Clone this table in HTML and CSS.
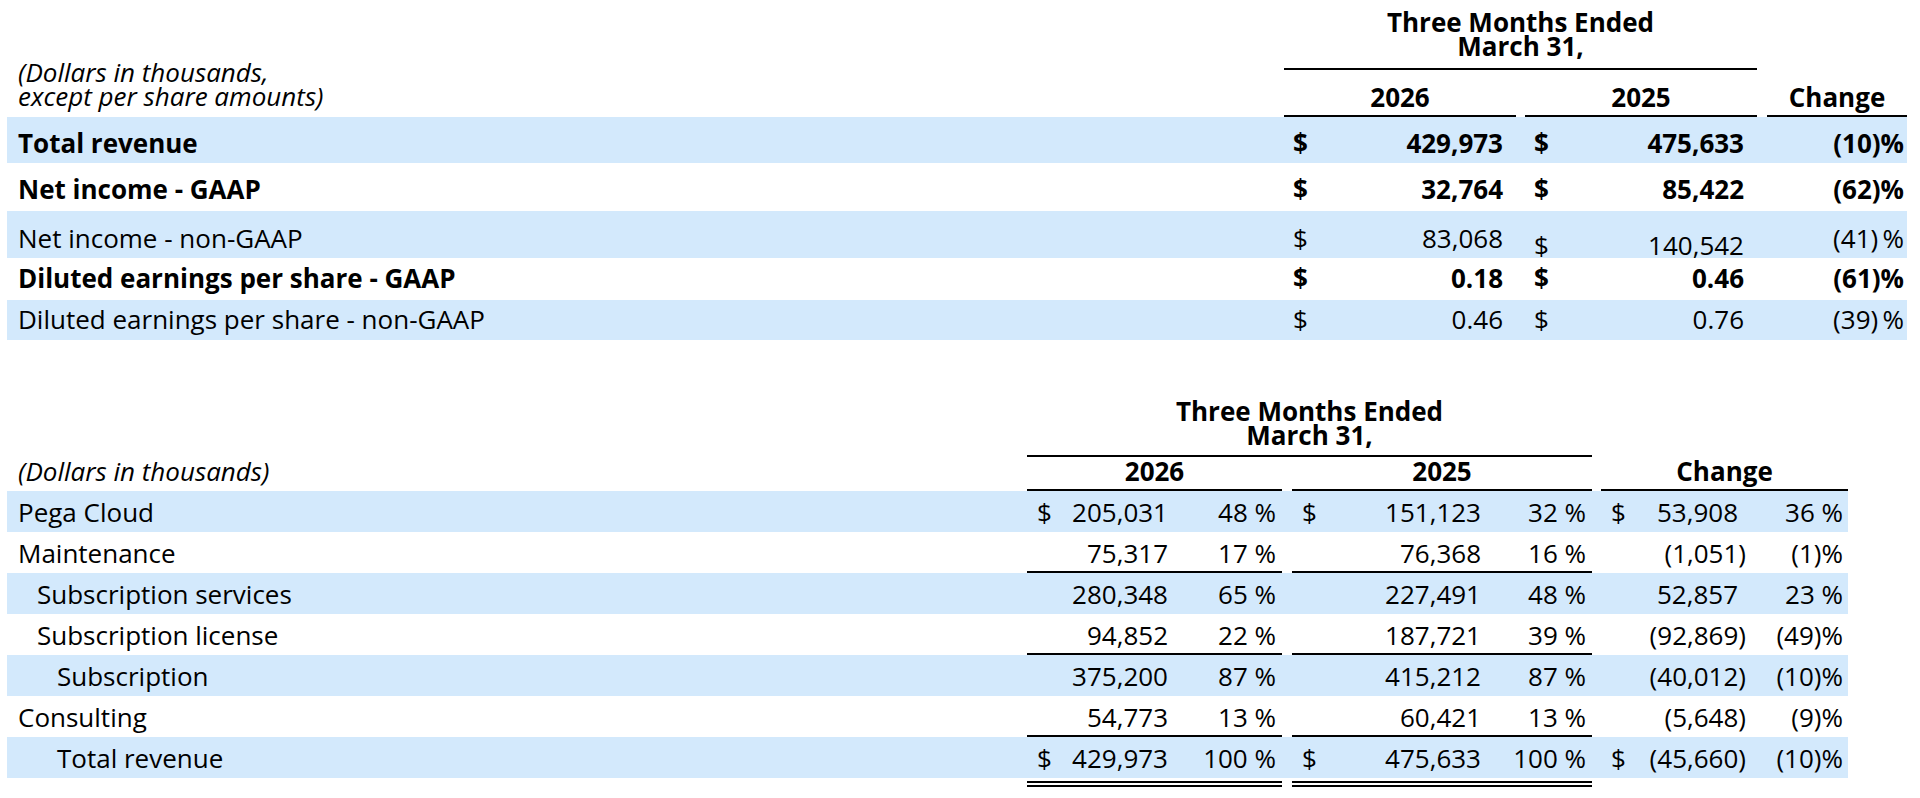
FILE: index.html
```html
<!DOCTYPE html>
<html lang="en">
<head>
<meta charset="utf-8">
<title>Financial highlights</title>
<link rel="stylesheet" href="styles.css">
</head>
<body>
<div class="page">
  <table class="fin top">
    <colgroup>
      <col class="w-lab"><col class="w-cur"><col class="w-amt"><col class="w-gap1">
      <col class="w-cur"><col class="w-amt"><col class="w-gap2"><col class="w-chg">
    </colgroup>
    <tr class="ha">
      <td class="lab-h" rowspan="2">(Dollars in thousands,<br>except per share amounts)</td>
      <td class="span-h" colspan="5">Three Months Ended<br>March 31,</td>
      <td></td><td></td>
    </tr>
    <tr class="hb">
      <td class="yr" colspan="2">2026</td><td></td>
      <td class="yr" colspan="2">2025</td><td></td>
      <td class="yr">Change</td>
    </tr>
    <tr class="band b ra">
      <td class="lab">Total revenue</td>
      <td class="cur">$</td><td class="amt">429,973</td><td></td>
      <td class="cur">$</td><td class="amt">475,633</td><td></td>
      <td class="chg">(10)%</td>
    </tr>
    <tr class="b rb">
      <td class="lab">Net income - GAAP</td>
      <td class="cur">$</td><td class="amt">32,764</td><td></td>
      <td class="cur">$</td><td class="amt">85,422</td><td></td>
      <td class="chg">(62)%</td>
    </tr>
    <tr class="band rc">
      <td class="lab">Net income - non-GAAP</td>
      <td class="cur">$</td><td class="amt">83,068</td><td></td>
      <td class="cur low">$</td><td class="amt low">140,542</td><td></td>
      <td class="chg">(41)&thinsp;%</td>
    </tr>
    <tr class="b rd">
      <td class="lab">Diluted earnings per share - GAAP</td>
      <td class="cur">$</td><td class="amt">0.18</td><td></td>
      <td class="cur">$</td><td class="amt">0.46</td><td></td>
      <td class="chg">(61)%</td>
    </tr>
    <tr class="band re">
      <td class="lab">Diluted earnings per share - non-GAAP</td>
      <td class="cur">$</td><td class="amt">0.46</td><td></td>
      <td class="cur">$</td><td class="amt">0.76</td><td></td>
      <td class="chg">(39)&thinsp;%</td>
    </tr>
  </table>

  <table class="fin bot">
    <colgroup>
      <col class="b-lab">
      <col class="b-cur"><col class="b-amt1"><col class="b-pct1">
      <col class="b-gap1">
      <col class="b-cur"><col class="b-amt2"><col class="b-pct2">
      <col class="b-gap2">
      <col class="b-cur"><col class="b-amt3"><col class="b-pct3">
    </colgroup>
    <tr class="ha">
      <td></td>
      <td class="span-h" colspan="7">Three Months Ended<br>March 31,</td>
      <td></td><td></td><td></td><td></td>
    </tr>
    <tr class="hb">
      <td class="lab-h">(Dollars in thousands)</td>
      <td class="yr" colspan="3">2026</td><td></td>
      <td class="yr" colspan="3">2025</td><td></td>
      <td class="yr" colspan="3">Change</td>
    </tr>
    <tr class="band">
      <td class="lab">Pega Cloud</td>
      <td class="cur">$</td><td class="amt">205,031</td><td class="pct">48&nbsp;%</td><td></td>
      <td class="cur">$</td><td class="amt">151,123</td><td class="pct">32&nbsp;%</td><td></td>
      <td class="cur">$</td><td class="camt np">53,908</td><td class="cpct">36&nbsp;%</td>
    </tr>
    <tr>
      <td class="lab">Maintenance</td>
      <td class="ul"></td><td class="amt ul">75,317</td><td class="pct ul">17&nbsp;%</td><td></td>
      <td class="ul"></td><td class="amt ul">76,368</td><td class="pct ul">16&nbsp;%</td><td></td>
      <td></td><td class="camt">(1,051)</td><td class="cpct">(1)%</td>
    </tr>
    <tr class="band">
      <td class="lab i1">Subscription services</td>
      <td></td><td class="amt">280,348</td><td class="pct">65&nbsp;%</td><td></td>
      <td></td><td class="amt">227,491</td><td class="pct">48&nbsp;%</td><td></td>
      <td></td><td class="camt np">52,857</td><td class="cpct">23&nbsp;%</td>
    </tr>
    <tr>
      <td class="lab i1">Subscription license</td>
      <td class="ul"></td><td class="amt ul">94,852</td><td class="pct ul">22&nbsp;%</td><td></td>
      <td class="ul"></td><td class="amt ul">187,721</td><td class="pct ul">39&nbsp;%</td><td></td>
      <td></td><td class="camt">(92,869)</td><td class="cpct">(49)%</td>
    </tr>
    <tr class="band">
      <td class="lab i2">Subscription</td>
      <td></td><td class="amt">375,200</td><td class="pct">87&nbsp;%</td><td></td>
      <td></td><td class="amt">415,212</td><td class="pct">87&nbsp;%</td><td></td>
      <td></td><td class="camt">(40,012)</td><td class="cpct">(10)%</td>
    </tr>
    <tr>
      <td class="lab">Consulting</td>
      <td class="ul"></td><td class="amt ul">54,773</td><td class="pct ul">13&nbsp;%</td><td></td>
      <td class="ul"></td><td class="amt ul">60,421</td><td class="pct ul">13&nbsp;%</td><td></td>
      <td></td><td class="camt">(5,648)</td><td class="cpct">(9)%</td>
    </tr>
    <tr class="band">
      <td class="lab i2">Total revenue</td>
      <td class="cur">$</td><td class="amt">429,973</td><td class="pct">100&nbsp;%</td><td></td>
      <td class="cur">$</td><td class="amt">475,633</td><td class="pct">100&nbsp;%</td><td></td>
      <td class="cur">$</td><td class="camt">(45,660)</td><td class="cpct">(10)%</td>
    </tr>
    <tr class="dbl">
      <td></td>
      <td class="dd" colspan="3"></td><td></td>
      <td class="dd" colspan="3"></td><td></td>
      <td colspan="3"></td>
    </tr>
  </table>
</div>
</body>
</html>
```

FILE: styles.css
```css
* { box-sizing: border-box; }

html, body {
  margin: 0;
  background: #ffffff;
}

body {
  font-family: "Open Sans", "Noto Sans", "Liberation Sans", sans-serif;
  font-size: 26px;
  color: #000000;
}

.page {
  padding: 0 0 0 7px;
}

.fin {
  border-collapse: separate;
  border-spacing: 0;
  table-layout: fixed;
}

.fin td {
  padding: 0;
  line-height: 24px;
  vertical-align: top;
  white-space: nowrap;
  font-weight: 400;
}

.band td { background: #d3e9fc; }
.b td { font-weight: 700; }

/* ---------- top table ---------- */
.top { width: 1900px; }
.top .w-lab { width: 1277px; }
.top .w-cur { width: 40px; }
.top .w-amt { width: 192px; }
.top .w-gap1 { width: 9px; }
.top .w-gap2 { width: 10px; }
.top .w-chg { width: 140px; }

.fin .span-h {
  text-align: center;
  font-weight: 700;
  border-bottom: 2px solid #000;
}

.fin .yr {
  text-align: center;
  font-weight: 700;
  border-bottom: 2px solid #000;
}

.fin .lab-h {
  font-style: italic;
  padding-left: 11px;
  vertical-align: bottom;
}

.top .ha td { padding-top: 10px; padding-bottom: 10px; }
.top .ha .lab-h { padding-top: 0; padding-bottom: 9px; }
.top .hb td { padding-top: 15px; padding-bottom: 6px; }

.top .ra td { padding-top: 14px; padding-bottom: 8px; }
.top .rb td { padding-top: 14px; padding-bottom: 10px; }
.top .rc td { padding-top: 15px; padding-bottom: 8px; }
.top .rd td { padding-top: 8px; padding-bottom: 10px; }
.top .re td { padding-top: 7px; padding-bottom: 9px; }
.top .rc td.low { padding-top: 22px; padding-bottom: 1px; }

.fin .lab { padding-left: 11px; }
.top .cur { padding-left: 9px; }
.top .amt { text-align: right; padding-right: 13px; }
.top .chg { text-align: right; padding-right: 3px; }

/* ---------- bottom table ---------- */
.bot { width: 1841px; margin-top: 58px; }
.bot .b-lab { width: 1020px; }
.bot .b-cur { width: 40px; }
.bot .b-amt1 { width: 107px; }
.bot .b-pct1 { width: 108px; }
.bot .b-gap1 { width: 10px; }
.bot .b-amt2 { width: 155px; }
.bot .b-pct2 { width: 105px; }
.bot .b-gap2 { width: 9px; }
.bot .b-amt3 { width: 108px; }
.bot .b-pct3 { width: 99px; }

.bot tr td { padding-top: 9px; padding-bottom: 8px; }
.bot .ha td { padding-top: 1px; padding-bottom: 8px; }
.bot .hb td { padding-top: 2px; padding-bottom: 6px; }
.bot .hb .lab-h { vertical-align: top; }
.bot td.ul { border-bottom: 2px solid #000; padding-bottom: 6px; }

.bot .i1 { padding-left: 30px; }
.bot .i2 { padding-left: 50px; }
.bot .cur { padding-left: 10px; }
.bot .amt { text-align: right; padding-right: 6px; }
.bot .pct { text-align: right; padding-right: 6px; }
.bot .camt { text-align: right; padding-right: 3px; }
.bot .camt.np { padding-right: 11px; }
.bot .cpct { text-align: right; padding-right: 5px; }

.bot .dbl td {
  padding: 0;
  height: 9px;
  line-height: 0;
}
.bot .dbl td.dd {
  border-bottom: 6px double #000;
}
```
